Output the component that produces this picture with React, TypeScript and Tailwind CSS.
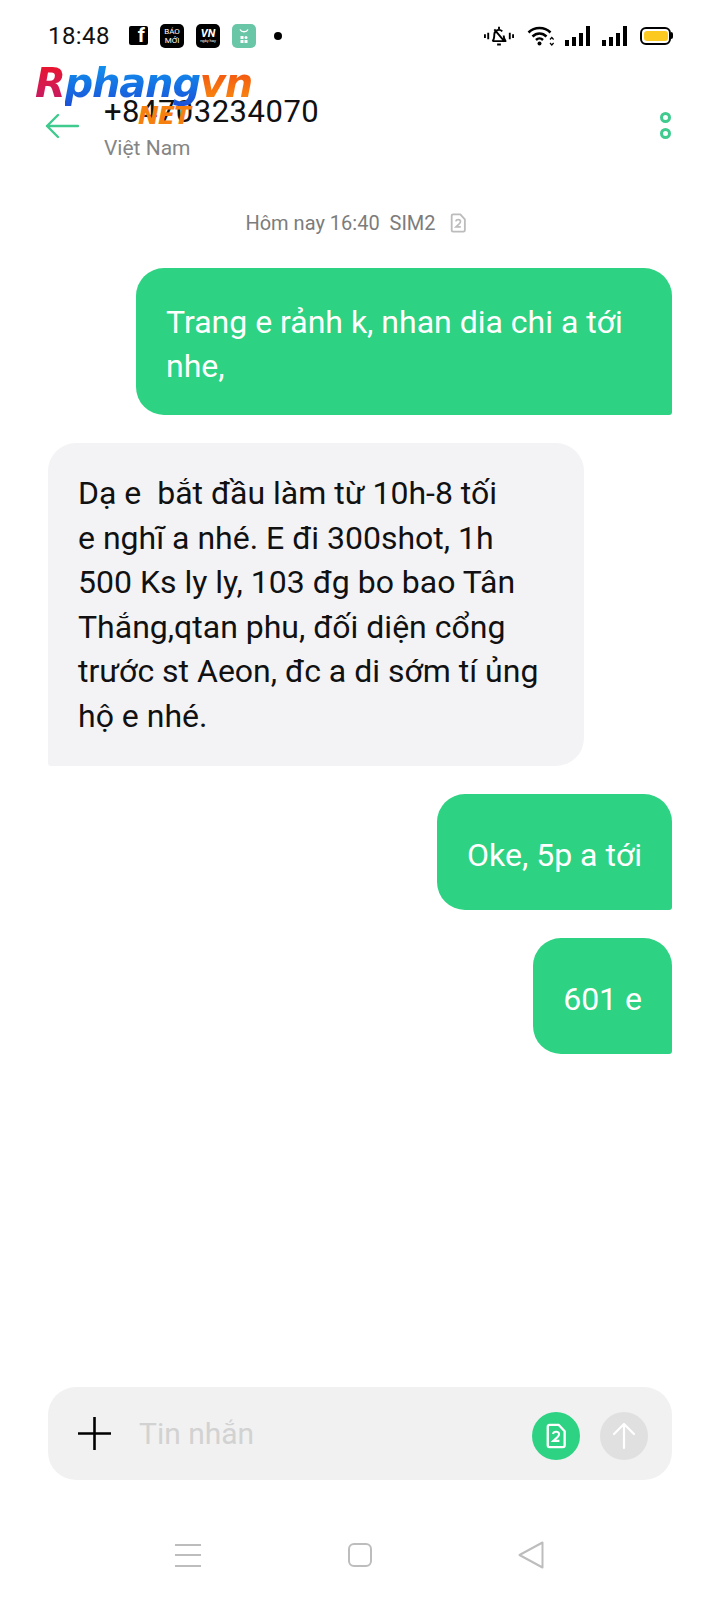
import React from 'react'

const font = "font-['Roboto','Liberation_Sans',sans-serif]"

const SimIcon = ({ className }: { className: string }) => (
  <svg viewBox="0 0 18 22" className={className} fill="none" stroke="currentColor" strokeWidth="2">
    <path d="M3 1.500h8l5 5.500v12a1.500 1.500 0 0 1-1.500 1.500h-11.500a1.500 1.500 0 0 1-1.500-1.500v-16a1.500 1.500 0 0 1 1.500-1.500z" strokeLinejoin="round" />
    <path d="M6 9.300c.3-1.500 1.300-2 2.700-2 1.500 0 2.500.8 2.500 2.100 0 1-.6 1.700-1.500 2.600l-3.500 3.200h5.300" strokeWidth="1.800" />
  </svg>
)

const Signal = ({ className }: { className: string }) => (
  <div className={`flex items-end gap-[3px] h-[20px] ${className}`}>
    <div className="w-[4px] h-[6px] bg-black" />
    <div className="w-[4px] h-[9px] bg-black" />
    <div className="w-[4px] h-[13px] bg-black" />
    <div className="w-[4px] h-[20px] bg-black" />
  </div>
)

const StatusBar = () => (
  <div className="flex items-center h-[71px] pl-12 pr-[47px]">
    <span className="text-[24px] text-[#111] tracking-[0.4px] w-[81px]">18:48</span>
    <div className="flex items-center gap-[12px]">
      <div className="relative w-[19px] h-[19px] bg-black rounded-[2px]">
        <span className="absolute right-[3px] bottom-0 text-white text-[20px] font-bold leading-[19px]">f</span>
      </div>
      <div className="w-[24px] h-[24px] bg-black rounded-[5px] flex flex-col items-center justify-center text-white text-[8px] leading-[9px]">
        <span>BÁO</span>
        <span>MỚI</span>
      </div>
      <div className="w-[24px] h-[24px] bg-black rounded-[5px] flex flex-col items-center justify-center text-white leading-none">
        <span className="text-[11px] font-bold italic">VN</span>
        <span className="text-[4px] whitespace-nowrap">ngày hay</span>
      </div>
      <div className="w-[24px] h-[24px] bg-[#69c6a7] rounded-[5px] flex items-center justify-center">
        <svg viewBox="0 0 24 24" className="w-[24px] h-[24px]" fill="white">
          <path d="M8 5.500c1.500 3 6.500 3 8 0" fill="none" stroke="white" strokeWidth="1.300" />
          <rect x="8.500" y="12" width="3" height="3" />
          <rect x="12.500" y="12" width="3" height="3" rx="1.500" />
          <rect x="8.500" y="16" width="3" height="3" />
          <rect x="12.500" y="16" width="3" height="3" />
        </svg>
      </div>
      <div className="w-[8px] h-[8px] bg-black rounded-full ml-[6px]" />
    </div>
    <div className="flex items-center ml-auto">
      <svg viewBox="0 0 32 22" className="w-[30px] h-[22px]" fill="none" stroke="black" strokeWidth="2" strokeLinejoin="round">
        <path d="M1 9v4M4.500 7.500v7M27.500 7.500v7M31 9v4" />
        <path d="M9 16.500c2-2 2-4 2-7.500a5 5 0 0 1 8.500-3M21 10.500c0 2.500.8 4.300 2 6h-14M16 1v2.500M14 20h4M11 4l11 13" />
      </svg>
      <svg viewBox="0 0 28 22" className="w-[28px] h-[22px] ml-[13px]" fill="none" stroke="black" strokeWidth="2.500">
        <path d="M1.500 7.500c6-6 16-6 22 0M5.500 11.500c4-4 10-4 14 0M9 15c2-2 5-2 7 0" />
        <circle cx="12.500" cy="18.500" r="2" fill="black" stroke="none" />
        <path d="M23 14.500l1.800-2 1.800 2M23 18l1.800 2 1.800-2" strokeWidth="1.200" />
      </svg>
      <Signal className="ml-[10px]" />
      <Signal className="ml-[12px]" />
      <div className="flex items-center ml-[13px]">
        <div className="w-[31px] h-[18px] rounded-[6px] border-2 border-black p-[2px]">
          <div className="w-[24px] h-full rounded-[3px] bg-[#fbc91f]" />
        </div>
        <div className="w-[2px] h-[7px] bg-black rounded-r" />
      </div>
    </div>
  </div>
)

const Header = () => (
  <div className="relative flex items-start h-[127px] pl-[45px] pr-[49px]">
    <svg viewBox="0 0 34 26" className="w-[34px] h-[26px] mt-[42px] shrink-0" fill="none" stroke="#3fcb8e" strokeWidth="2.400" strokeLinecap="round" strokeLinejoin="round">
      <path d="M33 13H2M13 2L2 13l11 11" />
    </svg>
    <div className="ml-[25px] mt-[23px]">
      <div className="text-[31px] leading-[36px] text-[#111] tracking-[0.5px]">+84703234070</div>
      <div className="text-[21px] leading-[34px] text-[#858585] mt-[1px]">Việt Nam</div>
    </div>
    <div className="ml-auto mt-[41px] flex flex-col gap-[5px]">
      <div className="w-[11px] h-[11px] rounded-full border-[3px] border-[#3fcb8e]" />
      <div className="w-[11px] h-[11px] rounded-full border-[3px] border-[#3fcb8e]" />
    </div>
    {/* watermark over the header */}
    <div className="absolute left-[35px] top-[-13px] font-['DejaVu_Sans',sans-serif] font-bold italic text-[40px] leading-[50px] tracking-[-1.200px] whitespace-nowrap">
      <span className="bg-gradient-to-b from-[#f01018] to-[#c01868] bg-clip-text text-transparent">R</span>
      <span className="bg-gradient-to-b from-[#1498f0] to-[#1c50d8] bg-clip-text text-transparent">phang</span>
      <span className="bg-gradient-to-b from-[#f03a10] to-[#f89010] bg-clip-text text-transparent">vn</span>
    </div>
    <div className="absolute left-[138px] top-[30px] font-['DejaVu_Sans',sans-serif] font-bold italic text-[25px] leading-[30px] tracking-[-1px] text-[#f5800f]">
      NET
    </div>
  </div>
)

const Sent = ({ children }: { children: React.ReactNode }) => (
  <div className="self-end flex items-center min-h-[116px] bg-[#2dd283] text-white rounded-[28px] rounded-br-[3px] px-[30px] pt-[32px] pb-[27px] text-[32px] leading-[44px]">
    {children}
  </div>
)

const Received = ({ children }: { children: React.ReactNode }) => (
  <div className="self-start bg-[#f3f3f6] text-[#111] rounded-[28px] rounded-bl-[3px] px-[30px] pt-[28px] pb-[28px] text-[32px] leading-[44.500px] w-[536px] whitespace-nowrap">
    {children}
  </div>
)

const InputBar = () => (
  <div className="flex items-center h-[93px] mx-12 rounded-[28px] bg-[#f1f1f1] pl-[30px] pr-[24px]">
    <svg viewBox="0 0 32 32" className="w-[33px] h-[33px] shrink-0" stroke="black" strokeWidth="2.500">
      <path d="M16 0v32M0 16h32" />
    </svg>
    <span className="ml-[28px] text-[30px] text-[#d2d2d2]">Tin nhắn</span>
    <div className="ml-auto mt-[5px] w-[48px] h-[48px] rounded-full bg-[#2dd283] flex items-center justify-center text-white">
      <SimIcon className="w-[21px] h-[26px]" />
    </div>
    <div className="ml-[20px] mt-[5px] w-[48px] h-[48px] rounded-full bg-[#e0e0e0] flex items-center justify-center">
      <svg viewBox="0 0 24 28" className="w-[24px] h-[28px]" fill="none" stroke="white" strokeWidth="2.200" strokeLinecap="round" strokeLinejoin="round">
        <path d="M12 26V2M2 12L12 2l10 10" />
      </svg>
    </div>
  </div>
)

const NavBar = () => (
  <div className="flex items-center justify-between h-[120px] pl-[175px] pr-[176px] pt-[30px]">
    <div className="flex flex-col gap-[8.500px] w-[26px]">
      <div className="h-[2px] bg-[#bdbdbd]" />
      <div className="h-[2px] bg-[#bdbdbd]" />
      <div className="h-[2px] bg-[#bdbdbd]" />
    </div>
    <div className="w-[24px] h-[24px] rounded-[6px] border-2 border-[#bdbdbd]" />
    <svg viewBox="0 0 26 28" className="w-[26px] h-[28px]" fill="none" stroke="#bdbdbd" strokeWidth="2" strokeLinejoin="round">
      <path d="M24.500 1.500v25L1.500 14z" />
    </svg>
  </div>
)

export default function App() {
  return (
    <div className={`${font} w-[720px] h-[1600px] bg-white flex flex-col`}>
      <StatusBar />
      <Header />
      <div className="flex items-center justify-center h-[26px] pr-[8px] text-[20px] text-[#7c7c7c] mt-[12px]">
        <span className="whitespace-pre">Hôm nay 16:40  SIM2</span>
        <SimIcon className="w-[17px] h-[20px] text-[#bcbcbc] ml-[14px]" />
      </div>
      <div className="flex flex-col gap-[28px] mt-[32px] mx-12 flex-1">
        <Sent>
          <div className="w-[476px]">Trang e rảnh k, nhan dia chi a tới nhe,</div>
        </Sent>
        <Received>
          Dạ e&nbsp; bắt đầu làm từ 10h-8 tối
          <br />
          e nghĩ a nhé. E đi 300shot, 1h
          <br />
          500 Ks ly ly, 103 đg bo bao Tân
          <br />
          Thắng,qtan phu, đối diện cổng
          <br />
          trước st Aeon, đc a di sớm tí ủng
          <br />
          hộ e nhé.
        </Received>
        <Sent>Oke, 5p a tới</Sent>
        <Sent>601 e</Sent>
      </div>
      <InputBar />
      <NavBar />
    </div>
  )
}
